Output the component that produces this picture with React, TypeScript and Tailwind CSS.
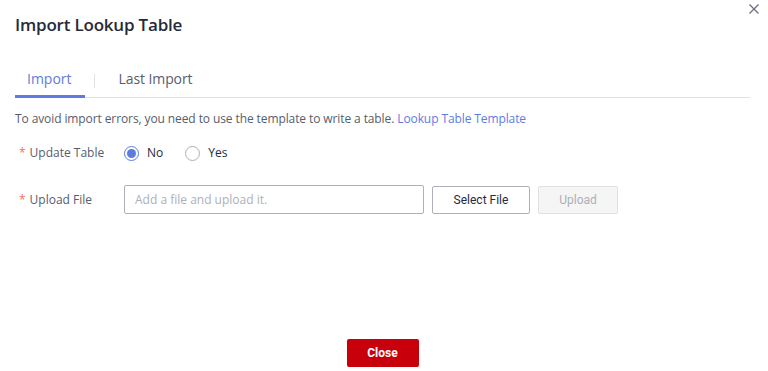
import React from "react";

export default function App() {
  const body = { fontFamily: '"Open Sans", "Noto Sans", sans-serif' };
  const btn = { fontFamily: 'Roboto, "Liberation Sans", sans-serif' };
  return (
    <div className="relative w-[768px] h-[371px] bg-white overflow-hidden" style={body}>
      <button className="absolute right-[8px] top-[3px] w-[12px] h-[12px] text-[#575d6c]">
        <svg viewBox="0 0 12 12" width="12" height="12" fill="none" stroke="#6a7080" strokeWidth="1.3">
          <path d="M1.5 1.5 L10.5 10.5 M10.5 1.5 L1.5 10.5" />
        </svg>
      </button>
      <div className="flex flex-col h-full px-[15px] pr-[18px]">
        <h1 className="pt-[12px] text-[17px] leading-[26px] font-semibold tracking-[-0.2px] text-[#252b3a]">Import Lookup Table</h1>
        <div className="mt-[26px] flex items-center border-b border-[#dfe1e6] h-[34px] pb-[4px]">
          <div className="relative h-full flex items-center px-[12px] text-[14px] text-[#5e7ce0]">
            Import
            <div className="absolute left-0 right-[-1px] bottom-[-5px] h-[3px] bg-[#5e7ce0]" />
          </div>
          <div className="w-px h-[14px] bg-[#dfe1e6] ml-[10px] mr-[24px] mt-[4px]" />
          <div className="text-[14px] text-[#575d6c] tracking-[-0.1px]">Last Import</div>
        </div>
        <p className="mt-[12px] text-[12px] leading-[18px] tracking-[-0.1px] text-[#575d6c]">
          To avoid import errors, you need to use the template to write a table.{" "}
          <span className="text-[#5e7ce0]">Lookup Table Template</span>
        </p>
        <div className="mt-[15px] flex items-center h-[20px] text-[12px] text-[#575d6c]">
          <div className="w-[109px] pl-[4px] flex items-center">
            <span className="text-[#f66f6a] mr-[4px]">*</span>Update Table
          </div>
          <label className="flex items-center mr-[22px]">
            <span className="w-[15px] h-[15px] rounded-full border border-[#5e7ce0] flex items-center justify-center mr-[8px]">
              <span className="w-[9px] h-[9px] rounded-full bg-[#5e7ce0]" />
            </span>
            <span className="text-[#252b3a]">No</span>
          </label>
          <label className="flex items-center">
            <span className="w-[15px] h-[15px] rounded-full border border-[#adb0b8] mr-[8px]" />
            <span className="text-[#252b3a]">Yes</span>
          </label>
        </div>
        <div className="mt-[22px] flex items-center text-[12px] text-[#575d6c]">
          <div className="w-[109px] pl-[4px] flex items-center">
            <span className="text-[#f66f6a] mr-[4px]">*</span>Upload File
          </div>
          <div className="w-[300px] h-[29px] border border-[#adb0b8] rounded-[2px] flex items-center px-[10px] text-[#adb0b8]">
            Add a file and upload it.
          </div>
          <button style={btn} className="ml-[8px] w-[98px] h-[28px] border border-[#adb0b8] rounded-[2px] bg-white text-[12px] text-[#252b3a]">
            Select File
          </button>
          <button style={btn} className="ml-[8px] w-[80px] h-[28px] border border-[#dfe1e6] rounded-[2px] bg-[#f5f5f6] text-[12px] text-[#adb0b8]">
            Upload
          </button>
        </div>
        <div className="flex-1" />
        <div className="flex justify-center pb-[4px]">
          <button style={btn} className="w-[72px] h-[28px] rounded-[2px] bg-[#c7000b] text-white text-[12px] font-bold">
            Close
          </button>
        </div>
      </div>
    </div>
  );
}
